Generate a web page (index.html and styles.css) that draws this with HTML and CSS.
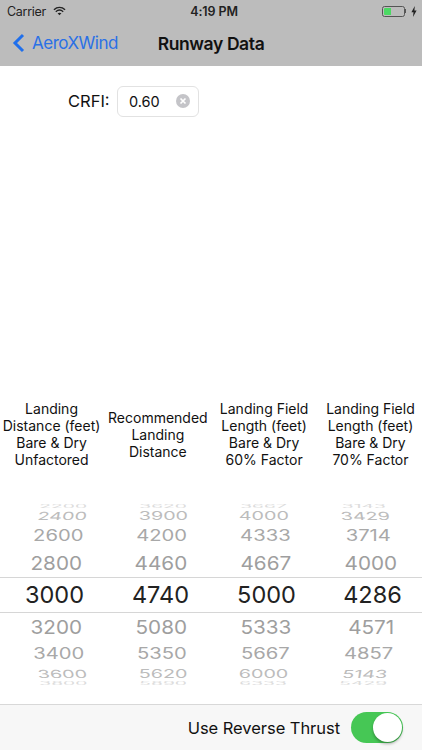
FILE: index.html
```html
<!DOCTYPE html>
<html lang="en">
<head>
<meta charset="utf-8">
<title>Runway Data</title>
<link rel="stylesheet" href="styles.css">
</head>
<body>
<div class="app">
  <header class="top">
    <div class="status">
      <div class="status-left">
        <span>Carrier</span>
        <svg class="wifi" viewBox="0 0 14 10" width="13" height="10"><path d="M1 3.6C4.6.3 9.4.3 13 3.6" fill="none" stroke="#222" stroke-width="1.5"/><path d="M3 5.7c2.4-2.1 5.6-2.1 8 0" fill="none" stroke="#222" stroke-width="1.5"/><path d="M7 9.6 4.9 7.5c1.2-1 3-1 4.2 0z" fill="#222"/></svg>
      </div>
      <div class="status-time">4:19 PM</div>
      <div class="status-right">
        <span class="battery"><span class="battery-fill"></span></span><span class="battery-tip"></span>
        <svg class="bolt" viewBox="0 0 6 11" width="6" height="11"><path d="M3.8 0 .4 6.2h2.1L2 11l3.6-6.4H3.4z" fill="#222"/></svg>
      </div>
    </div>
    <nav class="nav">
      <a class="back">
        <svg class="chevron" viewBox="0 0 13 20" width="13" height="20"><path d="M11 2 3 10l8 8" fill="none" stroke="#1f6fec" stroke-width="3"/></svg>
        <span>AeroXWind</span>
      </a>
      <h1 class="title">Runway Data</h1>
    </nav>
  </header>

  <main class="content">
    <div class="form-row">
      <label class="form-label">CRFI:</label>
      <div class="field">
        <span class="field-value">0.60</span>
        <svg class="clear" viewBox="0 0 14 14" width="14" height="14"><circle cx="7" cy="7" r="7" fill="#c4c4c8"/><path d="M4.5 4.5l5 5M9.500 4.500l-5 5" stroke="#fff" stroke-width="1.700"/></svg>
      </div>
    </div>

    <div class="heads">
      <div class="head">Landing<br>Distance (feet)<br>Bare &amp; Dry<br>Unfactored</div>
      <div class="head">Recommended<br>Landing<br>Distance</div>
      <div class="head">Landing Field<br>Length (feet)<br>Bare &amp; Dry<br>60% Factor</div>
      <div class="head">Landing Field<br>Length (feet)<br>Bare &amp; Dry<br>70% Factor</div>
    </div>

    <div class="picker">
      <div class="row r4 up"><span>2200</span><span>3620</span><span>3667</span><span>3143</span></div>
      <div class="row r3 up"><span>2400</span><span>3900</span><span>4000</span><span>3429</span></div>
      <div class="row r2 up"><span>2600</span><span>4200</span><span>4333</span><span>3714</span></div>
      <div class="row r1"><span>2800</span><span>4460</span><span>4667</span><span>4000</span></div>
      <div class="row r0"><span>3000</span><span>4740</span><span>5000</span><span>4286</span></div>
      <div class="row r1"><span>3200</span><span>5080</span><span>5333</span><span>4571</span></div>
      <div class="row r2 down"><span>3400</span><span>5350</span><span>5667</span><span>4857</span></div>
      <div class="row r3 down"><span>3600</span><span>5620</span><span>6000</span><span>5143</span></div>
      <div class="row r4 down"><span>3800</span><span>5890</span><span>6333</span><span>5429</span></div>
    </div>
  </main>

  <footer class="toolbar">
    <span class="toolbar-label">Use Reverse Thrust</span>
    <span class="switch"><span class="thumb"></span></span>
  </footer>
</div>
</body>
</html>
```

FILE: styles.css
```css
* { box-sizing: border-box; }
html, body { margin: 0; padding: 0; background: #fff; }
body { font-family: Inter, "Liberation Sans", sans-serif; color: #111; }

.app { width: 422px; height: 750px; display: flex; flex-direction: column; overflow: hidden; }

.top { height: 66px; background: #bcbcbc; flex: none; }

.status { height: 22px; display: grid; grid-template-columns: 1fr auto 1fr; align-items: center; padding: 0 5px 0 7px; font-size: 12.500px; letter-spacing: -.3px; color: #222; }
.status-left { display: flex; align-items: center; gap: 7px; }
.status-time { font-weight: 600; margin-left: 4px; letter-spacing: -.1px; }
.status-right { display: flex; align-items: center; justify-content: flex-end; }
.battery { width: 23px; height: 11px; border: 1px solid #555; border-radius: 2.500px; padding: 1px; display: flex; }
.battery-fill { width: 7px; background: #4cd964; border-radius: 1px 0 0 1px; }
.battery-tip { width: 1.500px; height: 4px; background: #555; margin-right: 5px; }

.nav { height: 44px; position: relative; display: flex; align-items: center; justify-content: center; padding-bottom: 2px; }
.back { position: absolute; left: 12px; top: 0; bottom: 2px; display: flex; align-items: center; gap: 7px; color: #2a70e6; font-size: 17px; letter-spacing: -.5px; }
.title { margin: 0; font-size: 17.500px; letter-spacing: -.4px; font-weight: 600; color: #111; }

.content { flex: 1; display: flex; flex-direction: column; }

.form-row { display: flex; align-items: center; gap: 9px; padding: 19px 0 0 68px; height: 51px; flex: none; }
.form-label { font-size: 16.500px; color: #111; width: 40px; white-space: nowrap; }
.field { width: 82px; height: 31px; border: 1px solid #e2e2e2; border-radius: 6px; display: flex; align-items: center; justify-content: space-between; padding: 0 8px 0 11px; font-size: 14.500px; color: #111; }

.heads { margin-top: 283px; height: 68px; display: grid; grid-template-columns: repeat(4, 106.300px); justify-content: center; align-items: center; flex: none; }
.head { text-align: center; font-size: 14px; line-height: 17px; color: #111; white-space: nowrap; }

.picker { margin-top: 35px; height: 184px; overflow: hidden; flex: none; --w: 106px; }
.row { display: grid; justify-content: center; grid-template-columns: repeat(4, var(--w)); grid-template-rows: minmax(0, 1fr); padding-left: 5px; align-items: center; justify-items: center; }
.row span { display: block; font-size: 23.500px; line-height: 1; font-weight: 400; transform: scale(var(--sx), var(--sy)) skewX(var(--skew, 0deg)); color: #9e9e9e; }

.r0 { height: 36px; --sx: 1; --sy: 1; border-top: 1px solid #d6d6d6; border-bottom: 1px solid #d6d6d6; }
.r0 span { color: #222; }
.r1 { height: 28px; --w: 105px; --sx: .88; --sy: .82; }
.r2 { height: 27px; --w: 103.500px; --sx: .86; --sy: .65; }
.r2 span { color: #a8a8a8; }
.r2.down { height: 26px; }
.r3 { height: 12px; --w: 101px; --sx: .84; --sy: .47; }
.r3.down { height: 14px; }
.r3 span { color: #bcbcbc; }
.r4 { height: 7px; --w: 100px; --sx: .82; --sy: .18; }
.r4.down { height: 6px; }
.r4 span { color: #dcdcdc; }

.r3.up span:first-child, .r3.down span:last-child { --skew: -5deg; }
.r3.up span:last-child, .r3.down span:first-child { --skew: 5deg; }

.toolbar { height: 46px; flex: none; background: #f7f7f7; border-top: 1px solid #d8d8d8; display: flex; align-items: center; justify-content: flex-end; gap: 11px; padding: 0 19px 0 0; }
.toolbar-label { font-size: 16.500px; letter-spacing: -.05px; color: #111; }
.switch { width: 52px; height: 31px; border-radius: 16px; background: #46c755; position: relative; display: block; }
.thumb { position: absolute; right: 1px; top: 1px; width: 29px; height: 29px; border-radius: 50%; background: #fff; box-shadow: 0 2px 3px rgba(0,0,0,.3); }
```
